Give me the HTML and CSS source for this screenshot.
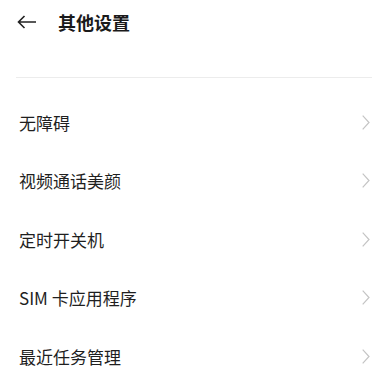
FILE: index.html
```html
<!DOCTYPE html>
<html lang="zh-CN">
<head>
  <meta charset="UTF-8" />
  <meta name="viewport" content="width=device-width, initial-scale=1" />
  <title>其他设置</title>
  <link rel="stylesheet" href="styles.css">
</head>
<body>

<div class="top-bar">
  <svg class="back" width="20" height="14" viewBox="0 0 20 14">
    <path d="M19 7H1.5M7.5 1L1.5 7l6 6" fill="none" stroke="#222" stroke-width="1.6" />
  </svg>
  <h1>其他设置</h1>
</div>

<div class="divider"></div>

<ul class="menu">
  <li>无障碍<svg class="chev" width="8" height="15" viewBox="0 0 8 15"><path d="M0.7 0.7L7 7.5L0.7 14.3" /></svg></li>
  <li>视频通话美颜<svg class="chev" width="8" height="15" viewBox="0 0 8 15"><path d="M0.7 0.7L7 7.5L0.7 14.3" /></svg></li>
  <li>定时开关机<svg class="chev" width="8" height="15" viewBox="0 0 8 15"><path d="M0.7 0.7L7 7.5L0.7 14.3" /></svg></li>
  <li>SIM 卡应用程序<svg class="chev" width="8" height="15" viewBox="0 0 8 15"><path d="M0.7 0.7L7 7.5L0.7 14.3" /></svg></li>
  <li>最近任务管理<svg class="chev" width="8" height="15" viewBox="0 0 8 15"><path d="M0.7 0.7L7 7.5L0.7 14.3" /></svg></li>
</ul>

</body>
</html>
```

FILE: styles.css
```css
* {
  margin: 0;
  padding: 0;
  box-sizing: border-box;
}

body {
  font-family: "Noto Sans CJK SC", "Liberation Sans", sans-serif;
  background: #fff;
  color: #222;
  width: 390px;
  height: 368px;
  overflow: hidden;
}

.top-bar {
  display: flex;
  align-items: center;
  height: 44px;
  padding-left: 17px;
}

.back {
  display: block;
}

h1 {
  font-size: 18px;
  font-weight: bold;
  margin-left: 21px;
  color: #1a1a1a;
}

.divider {
  height: 1px;
  background: #ececec;
  margin: 33px 18px 0 16px;
}

.menu {
  list-style: none;
  padding-top: 15px;
}

.menu li {
  display: flex;
  align-items: center;
  justify-content: space-between;
  height: 58.5px;
  padding: 0 20px 0 19px;
  font-size: 17px;
  color: #1f1f1f;
}

.chev {
  display: block;
  fill: none;
  stroke: #c4c4c4;
  stroke-width: 1.2;
}
```
